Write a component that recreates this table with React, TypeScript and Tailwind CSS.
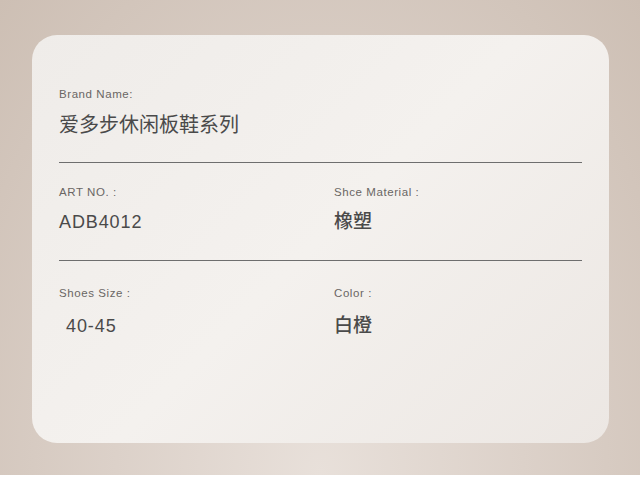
import React from "react";

const Field: React.FC<{ label: string; value: string; valueClass?: string; gap: string }> = ({ label, value, valueClass, gap }) => (
  <div>
    <div className="h-4 text-[11.5px] leading-4 text-[#6a6664] tracking-[0.05em]">{label}</div>
    <div className={`${gap} h-7 leading-7 text-[#4a4a4a] ${valueClass ?? ""}`}>{value}</div>
  </div>
);

const App: React.FC = () => {
  return (
    <div
      className="w-[640px] h-[495px] bg-white"
      style={{ fontFamily: '"Liberation Sans", "Noto Sans CJK SC", sans-serif' }}
    >
      <div className="h-[475px] pt-[35px] pl-[32px] bg-[radial-gradient(ellipse_at_50%_100%,#e8e0da_0%,#dcd1c9_45%,#cdbfb4_100%)]">
        <div className="w-[577px] h-[408px] rounded-[25px] bg-[linear-gradient(135deg,#efece9_0%,#f4f1ee_50%,#ece7e3_100%)] px-[27px] pt-[51px]">
          <Field label="Brand Name:" value="爱多步休闲板鞋系列" gap="mt-[9px]" valueClass="text-[20px]" />
          <div className="mt-[23px] h-px bg-[#6e6e6e]" />

          <div className="mt-[21px] grid grid-cols-[275px_1fr]">
            <Field label="ART NO. :" value="ADB4012" gap="mt-[8px]" valueClass="text-[18px] font-medium tracking-[0.05em]" />
            <Field label="Shce Material :" value="橡塑" gap="mt-[8px]" valueClass="text-[19px] font-medium" />
          </div>
          <div className="mt-[24px] h-px bg-[#6e6e6e]" />

          <div className="mt-[24px] grid grid-cols-[275px_1fr]">
            <Field label="Shoes Size :" value="40-45" gap="mt-[11px] pl-[7px]" valueClass="text-[18px] tracking-[0.05em]" />
            <Field label="Color :" value="白橙" gap="mt-[11px]" valueClass="text-[19px] font-medium" />
          </div>
        </div>
      </div>
    </div>
  );
};

export default App;
